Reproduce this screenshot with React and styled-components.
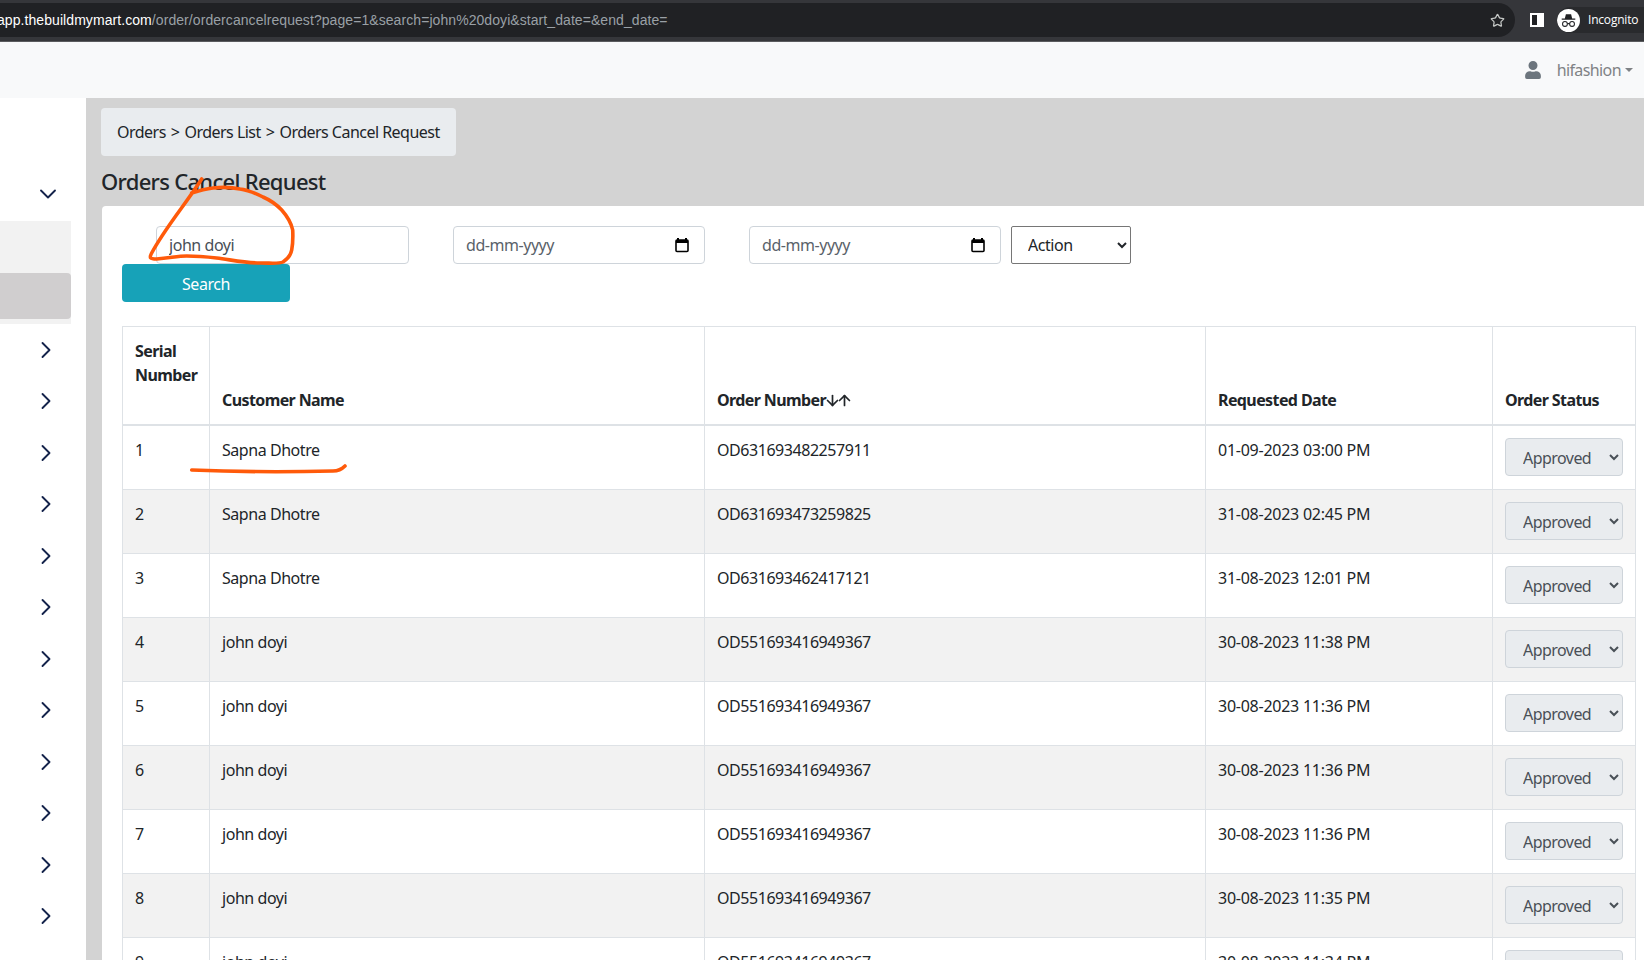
import React from 'react';
import styled, { createGlobalStyle } from 'styled-components';
import { ArrowDown, ArrowUp, ChevronDown, ChevronRight, Star } from 'lucide-react';

const GlobalStyle = createGlobalStyle`
  html, body {
    margin: 0;
    padding: 0;
    height: 960px;
    overflow: hidden;
    background: #d3d3d3;
  }
  * { box-sizing: border-box; }
  body {
    font-family: "Noto Sans", "Open Sans", sans-serif;
    font-size: 16px;
    line-height: 24px;
    letter-spacing: -0.45px;
    color: #212529;
  }
`;

const Page = styled.div`
  position: relative;
  width: 1644px;
  height: 960px;
  overflow: hidden;
  display: flex;
  flex-direction: column;
`;

/* browser chrome */
const Chrome = styled.div`
  height: 42px;
  flex: none;
  background: #35363a;
  display: flex;
  align-items: center;
  padding: 0 0 1px 0;
  border-bottom: 1px solid #5a5b5e;
`;

const AddressBar = styled.div`
  flex: none;
  width: 1515px;
  height: 34px;
  background: #202124;
  border-radius: 0 17px 17px 0;
  display: flex;
  align-items: center;
  justify-content: space-between;
  padding-right: 10px;
  font-family: "Liberation Sans", sans-serif;
  font-size: 14px;
  letter-spacing: 0.07px;
  overflow: hidden;
`;

const Url = styled.div`
  color: #9aa0a6;
  white-space: nowrap;
  margin-left: -3px;
  b { color: #fff; font-weight: 400; }
`;

const SideIcon = styled.svg`
  width: 14px;
  height: 14px;
  margin-left: 15px;
  flex: none;
`;

const IncognitoPill = styled.div`
  margin-left: 13px;
  flex: 1;
  height: 26px;
  border-radius: 13px 0 0 13px;
  background: #292a2d;
  display: flex;
  align-items: center;
  gap: 8px;
  color: #fff;
  font-family: "Open Sans", sans-serif;
  font-size: 12px;
  letter-spacing: -0.2px;
  white-space: nowrap;
  overflow: hidden;
`;

const IncognitoFace = styled.svg`
  width: 23px;
  height: 23px;
  flex: none;
`;

/* app navbar */
const Navbar = styled.div`
  height: 56px;
  flex: none;
  background: #f8f9fa;
  display: flex;
  align-items: center;
  justify-content: flex-end;
  padding-right: 11px;
  color: #7f8285;
  letter-spacing: -0.6px;
`;

const UserIcon = styled.svg`
  width: 18px;
  height: 18px;
  fill: #6c757d;
  margin-right: 15px;
`;

const Caret = styled.span`
  display: inline-block;
  margin-left: 4px;
  vertical-align: 3px;
  border-top: 4px solid #7f8285;
  border-left: 4px solid transparent;
  border-right: 4px solid transparent;
`;

const Body = styled.div`
  flex: 1;
  display: flex;
  min-height: 0;
`;

const Sidebar = styled.aside`
  width: 86px;
  flex: none;
  background: #fff;
  padding-top: 73px;
  color: #14234b;
`;

const DownRow = styled.div`
  height: 46px;
  padding-left: 34px;
  display: flex;
  align-items: center;
`;

const SubMenu = styled.div`
  width: 71px;
  height: 103px;
  margin-top: 4px;
  padding-top: 52px;
  background: #f2f2f2;
`;

const ActiveItem = styled.div`
  height: 46px;
  background: #d0cecf;
  border-radius: 0 4px 4px 0;
`;

const MenuRow = styled.div`
  height: 51.5px;
  padding-left: 32px;
  display: flex;
  align-items: center;
`;

const Main = styled.main`
  flex: 1;
  min-width: 0;
  padding: 10px 0 0 15px;
`;

const Breadcrumb = styled.div`
  display: inline-block;
  height: 48px;
  padding: 12px 16px;
  background: #e9ecef;
  border-radius: 4px;
  white-space: nowrap;
  letter-spacing: -0.52px;
`;

const Sep = styled.span`
  margin: 0 5px;
`;

const Title = styled.h4`
  margin: 6px 0 0 0;
  height: 44px;
  font-size: 22px;
  line-height: 38px;
  font-weight: 500;
  letter-spacing: -0.7px;
`;

const Card = styled.section`
  margin-left: 1px;
  background: #fff;
  border-radius: 4px 0 0 0;
  padding: 20px 8px 0 20px;
  height: 760px;
`;

const FilterRow = styled.div`
  display: flex;
  align-items: flex-start;
  padding-left: 34px;
`;

const Field = styled.div`
  width: ${(p) => p.$width}px;
  margin-right: ${(p) => p.$gap}px;
  height: 38px;
  flex: none;
  background: #fff;
  border: 1px solid #ced4da;
  border-radius: 4px;
  display: flex;
  align-items: center;
  padding: 0 12px;
  color: #495057;
`;

const TextInput = styled.input`
  flex: 1;
  min-width: 0;
  border: 0;
  padding: 0;
  outline: 0;
  background: transparent;
  font: inherit;
  letter-spacing: inherit;
  color: #495057;
  &::placeholder { color: #5a626a; opacity: 1; }
`;

const CalendarIcon = styled.svg`
  width: 14px;
  height: 16px;
  margin-right: 3px;
  flex: none;
`;

const ActionSelect = styled.select`
  width: 120px;
  height: 38px;
  flex: none;
  padding-left: 12px;
  background: #fff;
  border: 1px solid #767676;
  border-radius: 2px;
  font: inherit;
  letter-spacing: inherit;
  color: #212529;
`;

const SearchButton = styled.button`
  display: block;
  width: 168px;
  height: 38px;
  padding: 1px 0 0;
  border: 0;
  border-radius: 4px;
  background: #17a2b8;
  color: #fff;
  font: inherit;
  letter-spacing: inherit;
`;

const Table = styled.table`
  width: 1513px;
  margin-top: 24px;
  table-layout: fixed;
  border-collapse: collapse;
`;

const Th = styled.th`
  height: 98px;
  padding: 12px;
  text-align: left;
  font-weight: 700;
  letter-spacing: -0.6px;
  vertical-align: ${(p) => (p.$top ? 'top' : 'bottom')};
  border: 1px solid #dee2e6;
  border-bottom-width: 2px;
`;

const SortArrows = styled.span`
  display: inline-flex;
  vertical-align: -3px;
  svg { margin: 0 -2.5px; }
`;

const Row = styled.tr`
  background: ${(p) => (p.$striped ? '#f2f2f2' : '#fff')};
  &:first-child td { height: 65px; }
`;

const Td = styled.td`
  height: 64px;
  padding: 12px;
  vertical-align: top;
  border: 1px solid #dee2e6;
`;

const DateCell = styled(Td)`
  letter-spacing: -0.25px;
`;

const StatusSelect = styled.select`
  display: block;
  width: 118px;
  height: 38px;
  padding: 2px 0 0 13px;
  background-color: #e9ecef;
  border: 1px solid #ced4da;
  border-radius: 4px;
  font: inherit;
  letter-spacing: -0.55px;
  color: #495057;
  opacity: 1;
`;

const Annotation = styled.svg`
  position: absolute;
  left: 0;
  top: 0;
  width: 1644px;
  height: 960px;
  pointer-events: none;
  fill: none;
  stroke: #ff5a0a;
  stroke-width: 3.6;
  stroke-linecap: round;
  stroke-linejoin: round;
`;

const orders = [
  ['Sapna Dhotre', 'OD631693482257911', '01-09-2023 03:00 PM'],
  ['Sapna Dhotre', 'OD631693473259825', '31-08-2023 02:45 PM'],
  ['Sapna Dhotre', 'OD631693462417121', '31-08-2023 12:01 PM'],
  ['john doyi', 'OD551693416949367', '30-08-2023 11:38 PM'],
  ['john doyi', 'OD551693416949367', '30-08-2023 11:36 PM'],
  ['john doyi', 'OD551693416949367', '30-08-2023 11:36 PM'],
  ['john doyi', 'OD551693416949367', '30-08-2023 11:36 PM'],
  ['john doyi', 'OD551693416949367', '30-08-2023 11:35 PM'],
  ['john doyi', 'OD551693416949367', '30-08-2023 11:34 PM'],
];

const Calendar = () => (
  <CalendarIcon viewBox="0 0 14 16">
    <path d="M3 1v2M11 1v2" stroke="#000" strokeWidth="2" />
    <rect x="1" y="3" width="12" height="11.5" rx="1" fill="none" stroke="#000" strokeWidth="1.6" />
    <rect x="1" y="3" width="12" height="3" fill="#000" />
  </CalendarIcon>
);

export default function App() {
  return (
    <Page>
      <GlobalStyle />
      <Chrome>
        <AddressBar>
          <Url>
            <b>app.thebuildmymart.com</b>/order/ordercancelrequest?page=1&amp;search=john%20doyi&amp;start_date=&amp;end_date=
          </Url>
          <Star size={15} color="#c4c7c5" strokeWidth={2} />
        </AddressBar>
        <SideIcon viewBox="0 0 14 14">
          <rect width="14" height="14" fill="#fff" />
          <rect x="2" y="2" width="5" height="10" fill="#202124" />
        </SideIcon>
        <IncognitoPill>
          <IncognitoFace viewBox="0 0 22 22">
            <circle cx="11" cy="11" r="11" fill="#fff" />
            <path d="M7.5 9l1-4h5l1 4zM4.5 9.2h13v1.2h-13z" fill="#202124" />
            <circle cx="7.6" cy="14.3" r="2.3" fill="none" stroke="#202124" />
            <circle cx="14.4" cy="14.3" r="2.3" fill="none" stroke="#202124" />
            <path d="M9.9 14h2.2" stroke="#202124" />
          </IncognitoFace>
          Incognito
        </IncognitoPill>
      </Chrome>

      <Navbar>
        <UserIcon viewBox="0 0 448 512">
          <path d="M224 256a128 128 0 1 0 0-256 128 128 0 0 0 0 256zm90 32h-17a174 174 0 0 1-146 0h-17A134 134 0 0 0 0 422v42a48 48 0 0 0 48 48h352a48 48 0 0 0 48-48v-42a134 134 0 0 0-134-134z" />
        </UserIcon>
        hifashion<Caret />
      </Navbar>

      <Body>
        <Sidebar>
          <DownRow>
            <ChevronDown size={28} strokeWidth={1.6} />
          </DownRow>
          <SubMenu>
            <ActiveItem />
          </SubMenu>
          {Array.from({ length: 12 }, (_, i) => (
            <MenuRow key={i}>
              <ChevronRight size={28} strokeWidth={1.6} />
            </MenuRow>
          ))}
        </Sidebar>

        <Main>
          <Breadcrumb>
            Orders<Sep>&gt;</Sep>Orders List<Sep>&gt;</Sep>Orders Cancel Request
          </Breadcrumb>
          <Title>Orders Cancel Request</Title>
          <Card>
            <FilterRow>
              <Field $width={253} $gap={44}>
                <TextInput defaultValue="john doyi" />
              </Field>
              <Field $width={252} $gap={44}>
                <TextInput placeholder="dd-mm-yyyy" />
                <Calendar />
              </Field>
              <Field $width={252} $gap={10}>
                <TextInput placeholder="dd-mm-yyyy" />
                <Calendar />
              </Field>
              <ActionSelect defaultValue="Action">
                <option>Action</option>
              </ActionSelect>
            </FilterRow>
            <SearchButton>Search</SearchButton>

            <Table>
              <colgroup>
                <col width="87" />
                <col width="495" />
                <col width="501" />
                <col width="287" />
                <col width="143" />
              </colgroup>
              <thead>
                <tr>
                  <Th $top>Serial<br />Number</Th>
                  <Th>Customer Name</Th>
                  <Th>
                    Order Number
                    <SortArrows>
                      <ArrowDown size={17} strokeWidth={2.4} />
                      <ArrowUp size={17} strokeWidth={2.4} />
                    </SortArrows>
                  </Th>
                  <Th>Requested Date</Th>
                  <Th>Order Status</Th>
                </tr>
              </thead>
              <tbody>
                {orders.map((o, i) => (
                  <Row key={i} $striped={i % 2 === 1}>
                    <Td>{i + 1}</Td>
                    <Td>{o[0]}</Td>
                    <Td>{o[1]}</Td>
                    <DateCell>{o[2]}</DateCell>
                    <Td>
                      <StatusSelect disabled defaultValue="Approved">
                        <option>Approved</option>
                      </StatusSelect>
                    </Td>
                  </Row>
                ))}
              </tbody>
            </Table>
          </Card>
        </Main>
      </Body>

      <Annotation viewBox="0 0 1644 960">
        <path d="M201.7 179C185 205 165 228 151.7 253C149 258 150 259 156.7 259C170 258 178 256 186.7 256C198 256 208 257 216.7 258C232 260 246 263 260 263C272 263 279 264 283 262C289 258 291 254 291.7 250C293 243 293 236 292.7 230C291 222 287 216 281.7 210C276 204 270 200 263 197C255 193 248 190 240 189C231 187 222 187 213 188C205 189 198 191 191.7 193" />
        <path d="M191.7 470C240 472 290 472 333 471C338 471 342 469 345 466" />
      </Annotation>
    </Page>
  );
}
